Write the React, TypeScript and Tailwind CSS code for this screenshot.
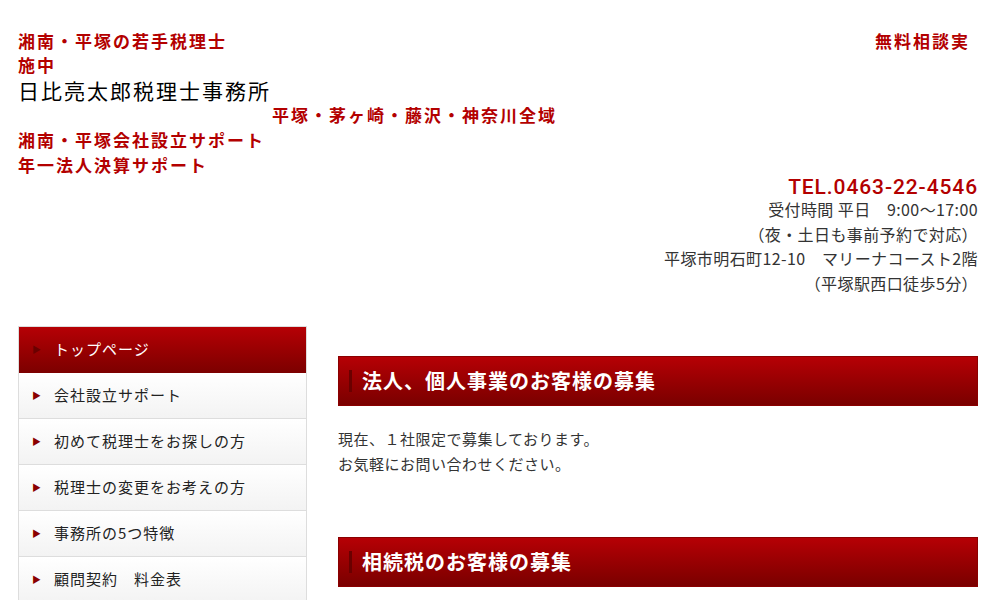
const jp = { fontFamily: '"Noto Sans CJK JP", "Noto Sans", sans-serif' };

const navItems = [
  "トップページ",
  "会社設立サポート",
  "初めて税理士をお探しの方",
  "税理士の変更をお考えの方",
  "事務所の5つ特徴",
  "顧問契約　料金表",
];

function SectionTitle({ children }: { children: string }) {
  return (
    <h2 className="flex items-center h-[50px] border border-[#8a0000] bg-gradient-to-b from-[#b60005] to-[#7a0000] pl-[10px]">
      <span className="w-[3px] h-[22px] bg-[#6a0000] mr-[10px]" />
      <span className="text-white font-bold text-[20px] tracking-[1px] leading-none">{children}</span>
    </h2>
  );
}

export default function App() {
  return (
    <div className="w-full bg-white text-[#333]" style={jp}>
      <div className="w-[960px] ml-[18px]">
        <header className="flex justify-between pt-[28px]">
          <div className="font-bold text-[#b30000] text-[17px] tracking-[2px]">
            <p className="leading-[25px]">湘南・平塚の若手税理士</p>
            <p className="leading-[24px]">施中</p>
            <h1 className="font-normal text-black text-[21px] tracking-[2px] leading-[26px]">日比亮太郎税理士事務所</h1>
            <p className="leading-[24px] ml-[254px]">平塚・茅ヶ崎・藤沢・神奈川全域</p>
            <p className="leading-[25px]">湘南・平塚会社設立サポート</p>
            <p className="leading-[25px]">年一法人決算サポート</p>
          </div>
          <p className="font-bold text-[#b30000] text-[17px] tracking-[2px] leading-[25px] mr-[8px]">無料相談実</p>
        </header>

        <div className="text-right">
          <p
            className="text-[#b30000] text-[21px] leading-[20px] tracking-[0.9px] font-medium"
            style={{ fontFamily: 'Roboto, "Liberation Sans", Arial, sans-serif' }}
          >
            TEL.0463-22-4546
          </p>
          <div className="text-[16px] leading-[24.5px] tracking-[0.4px] text-[#333]">
            <p>受付時間 平日　9:00～17:00</p>
            <p>（夜・土日も事前予約で対応）</p>
            <p>平塚市明石町12-10　マリーナコースト2階</p>
            <p>（平塚駅西口徒歩5分）</p>
          </div>
        </div>

        <div className="flex mt-[31px] gap-[31px] items-start">
          <nav className="w-[289px] shrink-0 border-l border-r border-t border-[#ddd]">
            {navItems.map((item, i) => (
              <a
                key={item}
                className={`flex items-center h-[46px] pl-[13px] text-[15px] tracking-[1px] border-b ${
                  i === 0
                    ? "bg-gradient-to-b from-[#b60005] to-[#7d0000] text-white border-[#7d0000]"
                    : "bg-gradient-to-b from-white to-[#f3f3f3] text-[#222] border-[#ddd]"
                }`}
              >
                <span className={`mr-[12px] text-[9px] leading-none ${i === 0 ? "text-[#6a0000]" : "text-[#8a0000]"}`}>▶</span>
                {item}
              </a>
            ))}
          </nav>

          <main className="flex-1 pt-[30px]">
            <SectionTitle>法人、個人事業のお客様の募集</SectionTitle>
            <div className="mt-[20px] text-[15px] leading-[25px] tracking-[0.5px] text-[#333]">
              <p>現在、１社限定で募集しております。</p>
              <p>お気軽にお問い合わせください。</p>
            </div>
            <div className="mt-[61px]">
              <SectionTitle>相続税のお客様の募集</SectionTitle>
            </div>
          </main>
        </div>
      </div>
    </div>
  );
}
